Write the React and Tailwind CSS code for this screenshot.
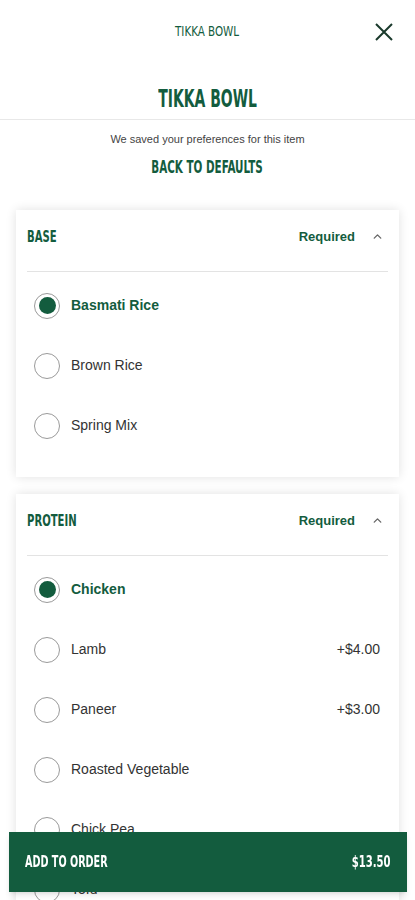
import React from 'react';

const condFont = { fontFamily: '"DejaVu Sans Condensed", "Liberation Sans", sans-serif' };

// narrow display type: DejaVu Condensed squeezed horizontally
const Cond = ({ children, className = '' }) => (
    <span className={`inline-block whitespace-nowrap ${className}`} style={condFont}>
        {children}
    </span>
);

const Radio = ({ checked }) => (
    <span className="flex h-[26px] w-[26px] shrink-0 items-center justify-center rounded-full border border-[#9a9a9a] bg-white">
        {checked && <span className="h-[17px] w-[17px] rounded-full bg-[#135c3e]"></span>}
    </span>
);

const Chevron = () => (
    <svg width="13" height="13" viewBox="0 0 24 24" fill="none" stroke="#666" strokeWidth="2.5" strokeLinecap="round" strokeLinejoin="round">
        <path d="M6 15l6-6 6 6" />
    </svg>
);

const Option = ({ label, price, checked }) => (
    <div className="flex h-[60px] items-center pl-[7px]">
        <Radio checked={checked} />
        <span className={`ml-[11px] flex-1 text-[14px] ${checked ? 'font-bold text-[#135c3e]' : 'text-[#333]'}`}>{label}</span>
        {price && <span className="mr-[8px] text-[14px] text-[#333]">{price}</span>}
    </div>
);

const Section = ({ title, options }) => (
    <div className="mx-[16px] bg-white px-[11px] pb-[21px] shadow-[0_0_10px_rgba(0,0,0,0.12)]">
        <div className="border-b border-[#e3e3e3]">
            <div className="mb-[24px] mt-[17px] flex h-[20px] items-center">
                <div className="flex-1">
                    <Cond className="origin-left scale-x-[0.7] text-[16px] font-bold text-[#135c3e]">{title}</Cond>
                </div>
                <span className="text-[13px] font-bold text-[#135c3e]">Required</span>
                <span className="ml-[16px] mr-[4px] flex"><Chevron /></span>
            </div>
        </div>
        <div className="pt-[4px]">
            {options.map((o) => (
                <Option key={o.label} {...o} />
            ))}
        </div>
    </div>
);

const App = () => (
    <div className="min-h-screen bg-white pb-[80px]" style={{ fontFamily: '"Liberation Sans", Arial, sans-serif' }}>
        <div className="relative flex h-[62px] items-center justify-center">
            <Cond className="scale-x-[0.82] text-[14px] text-[#135c3e]">TIKKA BOWL</Cond>
            <button className="absolute right-[22px] top-[23px] text-[#1a3a2c]">
                <svg width="18" height="18" viewBox="0 0 18 18" stroke="currentColor" strokeWidth="2" fill="none">
                    <path d="M1 1l16 16M17 1L1 17" />
                </svg>
            </button>
        </div>
        <div className="flex h-[58px] items-center justify-center border-b border-[#e8e8e8] pt-[16px]">
            <h1>
                <Cond className="scale-x-[0.62] text-[25px] font-bold text-[#135c3e]">TIKKA BOWL</Cond>
            </h1>
        </div>
        <div className="flex flex-col items-center pt-[11px]">
            <p className="text-[11px] text-[#444]">We saved your preferences for this item</p>
            <button className="mt-[5px]">
                <Cond className="scale-x-[0.64] text-[18px] font-bold text-[#135c3e]">BACK TO DEFAULTS</Cond>
            </button>
        </div>
        <div className="mt-[30px] flex flex-col gap-[17px]">
            <Section
                title="BASE"
                options={[
                    { label: 'Basmati Rice', checked: true },
                    { label: 'Brown Rice' },
                    { label: 'Spring Mix' },
                ]}
            />
            <Section
                title="PROTEIN"
                options={[
                    { label: 'Chicken', checked: true },
                    { label: 'Lamb', price: '+$4.00' },
                    { label: 'Paneer', price: '+$3.00' },
                    { label: 'Roasted Vegetable' },
                    { label: 'Chick Pea' },
                    { label: 'Tofu' },
                ]}
            />
        </div>
        <div className="fixed bottom-[8px] left-[9px] right-[8px] flex h-[60px] items-center justify-between bg-[#135c3e] px-[16px] text-white shadow-md">
            <Cond className="origin-left scale-x-[0.67] text-[16px] font-bold">ADD TO ORDER</Cond>
            <Cond className="origin-right scale-x-[0.7] text-[16px] font-bold">$13.50</Cond>
        </div>
    </div>
);

export default App;
